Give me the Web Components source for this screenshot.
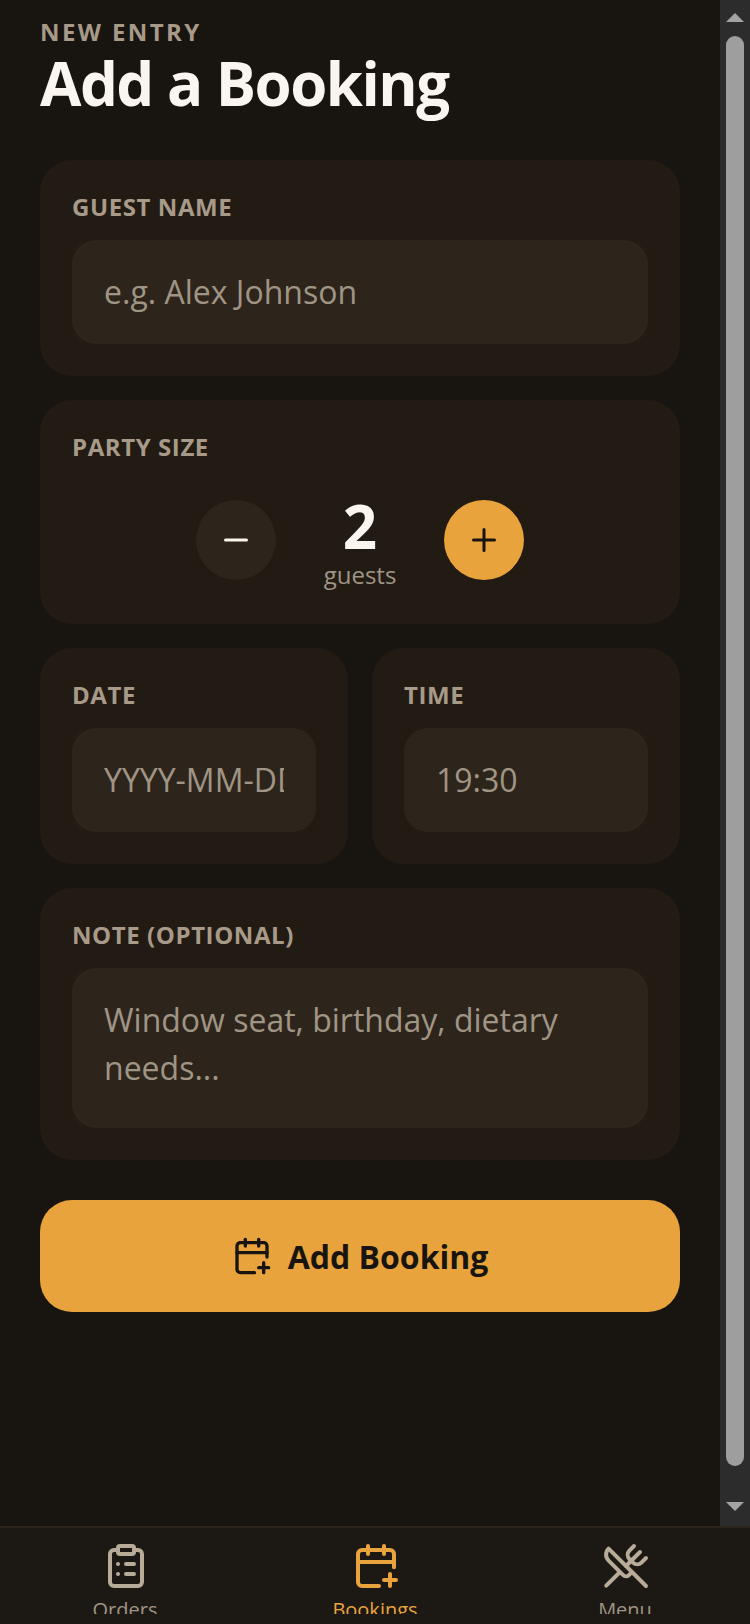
<!doctype html>
<html lang="en"><head><meta charset="utf-8"><title>Add a Booking</title>
<style>
html,body{margin:0;height:100%;background:#181410;font-family:"Open Sans",sans-serif}
body{width:750px;height:1624px;overflow:hidden}
</style></head><body>
<app-shell>
  <page-header eyebrow="NEW ENTRY" title-text="Add a Booking"></page-header>
  <field-card label="GUEST NAME"><text-field>e.g. Alex Johnson</text-field></field-card>
  <field-card label="PARTY SIZE"><party-stepper value="2" unit="guests"></party-stepper></field-card>
  <card-row>
    <field-card label="DATE"><text-field>YYYY-MM-DD</text-field></field-card>
    <field-card label="TIME"><text-field>19:30</text-field></field-card>
  </card-row>
  <field-card label="NOTE (OPTIONAL)"><text-field multiline>Window seat, birthday, dietary needs...</text-field></field-card>
  <primary-button>Add Booking</primary-button>
  <tab-bar slot="nav">
    <tab-item label="Orders" icon="orders"></tab-item>
    <tab-item label="Bookings" icon="bookings" active></tab-item>
    <tab-item label="Menu" icon="menu"></tab-item>
  </tab-bar>
</app-shell>
<script>
const ICONS={
 orders:'<rect x="8" y="2" width="8" height="4" rx="1"/><path d="M16 4h2a2 2 0 0 1 2 2v14a2 2 0 0 1-2 2H6a2 2 0 0 1-2-2V6a2 2 0 0 1 2-2h2"/><path d="M12 11h4"/><path d="M12 16h4"/><path d="M8 11h.01"/><path d="M8 16h.01"/>',
 bookings:'<path d="M16 19h6"/><path d="M16 2v4"/><path d="M19 16v6"/><path d="M21 12.598V6a2 2 0 0 0-2-2H5a2 2 0 0 0-2 2v14a2 2 0 0 0 2 2h8.5"/><path d="M3 10h18"/><path d="M8 2v4"/>',
 menu:'<path d="m16 2-2.3 2.3a3 3 0 0 0 0 4.2l1.8 1.8a3 3 0 0 0 4.2 0L22 8"/><path d="M15 15 3.3 3.3a4.2 4.2 0 0 0 0 6l7.3 7.3c.7.7 2 .7 2.8 0L15 15Zm0 0 7 7"/><path d="m2.1 21.8 6.4-6.3"/><path d="m19 5-7 7"/>',
 minus:'<path d="M5 12h14"/>',
 plus:'<path d="M5 12h14"/><path d="M12 5v14"/>'
};
const svg=(n,s)=>`<svg width="${s}" height="${s}" viewBox="0 0 24 24" fill="none" stroke="currentColor" stroke-width="2" stroke-linecap="round" stroke-linejoin="round" aria-hidden="true">${ICONS[n]}</svg>`;
class Base extends HTMLElement{
  render(html){ if(!this.shadowRoot) this.attachShadow({mode:'open'}); this.shadowRoot.innerHTML=html; }
}
customElements.define('app-shell',class extends Base{connectedCallback(){this.render(`<style>
:host{display:flex;flex-direction:column;width:750px;height:1624px}
.top{flex:1;min-height:0;display:flex}
.pane{flex:1;min-width:0;box-sizing:border-box;padding:16px 40px 0;display:flex;flex-direction:column;gap:24px}
</style><div class="top"><div class="pane"><slot></slot></div><fake-scrollbar></fake-scrollbar></div><slot name="nav"></slot>`)}});
customElements.define('fake-scrollbar',class extends Base{connectedCallback(){this.render(`<style>
:host{display:flex;flex-direction:column;align-items:center;width:30px;background:#2c2c2c;box-sizing:border-box;padding-top:13px}
.up,.down{width:0;height:0;border-left:9px solid transparent;border-right:9px solid transparent}
.up{border-bottom:9px solid #a3a3a3}
.thumb{width:18px;height:1430px;margin:14px 0 36px;border-radius:9px;background:#9e9e9e}
.down{border-top:9px solid #a3a3a3}
</style><div class="up"></div><div class="thumb"></div><div class="down"></div>`)}});
customElements.define('page-header',class extends Base{connectedCallback(){this.render(`<style>
:host{display:block;margin-bottom:19px}
.e{font-size:24px;line-height:32px;font-weight:700;letter-spacing:2.4px;color:#a89a88}
.t{font-size:60px;line-height:68px;font-weight:700;letter-spacing:-1.5px;color:#faf5ee;margin-top:1px}
</style><div class="e">${this.getAttribute('eyebrow')}</div><div class="t">${this.getAttribute('title-text')}</div>`)}});
customElements.define('field-card',class extends Base{connectedCallback(){this.render(`<style>
:host{display:block;box-sizing:border-box;background:#221b14;border-radius:32px;padding:31px 32px 32px;min-width:0}
.l{font-size:24px;line-height:32px;font-weight:700;letter-spacing:.58px;color:#a89a88;margin-bottom:17px}
</style><div class="l">${this.getAttribute('label')}</div><slot></slot>`)}});
customElements.define('card-row',class extends Base{connectedCallback(){this.render(`<style>
:host{display:flex;gap:24px}
::slotted(*){flex:1 1 0}
</style><slot></slot>`)}});
customElements.define('text-field',class extends Base{connectedCallback(){this.render(`<style>
:host{display:block;box-sizing:border-box;background:#2d251c;border-radius:24px;padding:28px 32px;color:#a09585;font-size:32px;line-height:48px;font-weight:400}
:host([multiline]){padding:28px 32px 36px}
.c{overflow:hidden;white-space:nowrap}
:host([multiline]) .c{white-space:normal}
</style><div class="c"><slot></slot></div>`)}});
customElements.define('party-stepper',class extends Base{connectedCallback(){this.render(`<style>
:host{display:flex;justify-content:center;align-items:flex-start;height:112px}
.b{flex:none;width:80px;height:80px;border-radius:50%;margin-top:20px;display:flex;align-items:center;justify-content:center}
.minus{background:#2d251c;color:#faf5ee}
.plus{background:#e8a33d;color:#181410}
.v{width:168px;display:flex;flex-direction:column;align-items:center}
.n{font-size:60px;line-height:72px;font-weight:700;color:#faf5ee;margin-top:10px}
.u{font-size:24px;line-height:34px;color:#a09585;margin-top:-4px}
</style><div class="b minus">${svg('minus',36)}</div><div class="v"><div class="n">${this.getAttribute('value')}</div><div class="u">${this.getAttribute('unit')}</div></div><div class="b plus">${svg('plus',36)}</div>`)}});
customElements.define('primary-button',class extends Base{connectedCallback(){this.render(`<style>
:host{display:flex;align-items:center;justify-content:center;gap:16px;height:112px;margin-top:16px;border-radius:32px;background:#e8a33d;color:#181410;font-size:32px;font-weight:700}
svg{flex:none}
</style>${svg('bookings',40)}<span><slot></slot></span>`)}});
customElements.define('tab-bar',class extends Base{connectedCallback(){this.render(`<style>
:host{display:flex;flex:none;box-sizing:border-box;height:98px;background:#1c1814;border-top:2px solid #2d251c;padding:14px 0 10px}
</style><slot></slot>`)}});
customElements.define('tab-item',class extends Base{connectedCallback(){const a=this.hasAttribute('active');this.render(`<style>
:host{flex:1;min-width:0;display:flex;flex-direction:column;align-items:center;overflow:hidden;color:${a?'#e8a33d':'#b8ab98'}}
svg{flex:none;display:block;margin-left:2px}
.l{font-size:20px;line-height:28px;margin-top:6px;color:${a?'#e8a33d':'#a09585'}}
</style>${svg(this.getAttribute('icon'),48)}<div class="l">${this.getAttribute('label')}</div>`)}});
</script>
</body></html>
